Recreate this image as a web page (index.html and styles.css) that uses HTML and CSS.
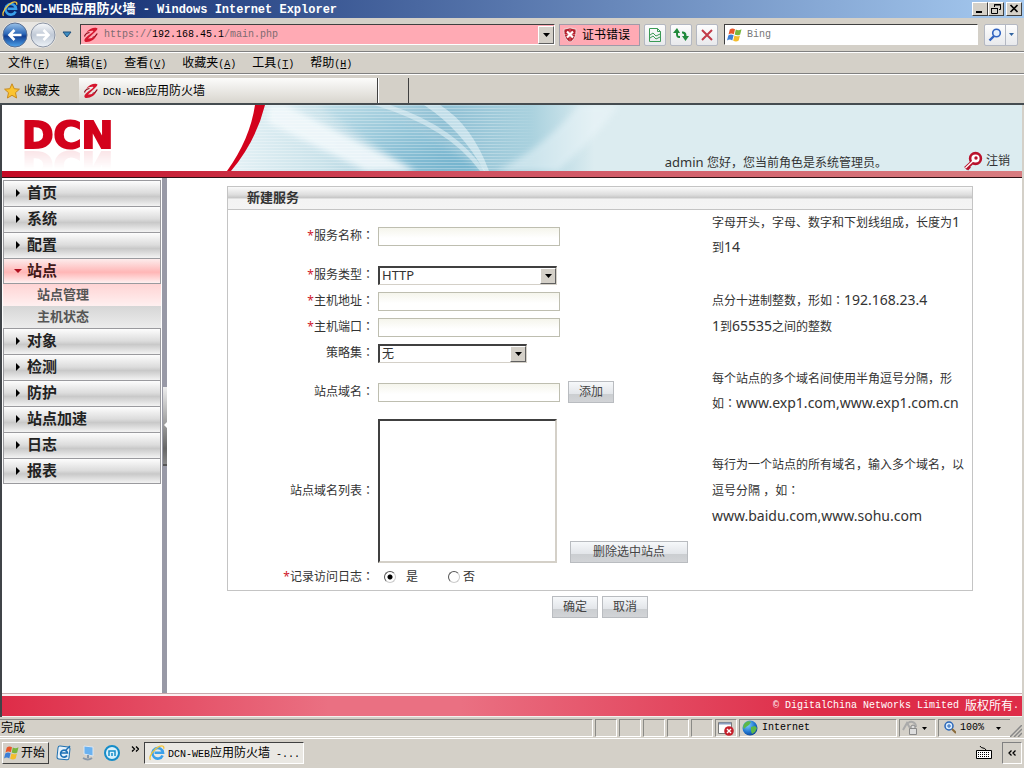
FILE: index.html
```html
<!DOCTYPE html>
<html lang="zh-CN">
<head>
<meta charset="utf-8">
<title>DCN-WEB应用防火墙</title>
<link rel="stylesheet" href="styles.css">
</head>
<body>
<svg class="defs" width="0" height="0" aria-hidden="true">
  <defs>
    <linearGradient id="blue" x1="0" y1="0" x2="0" y2="1"><stop offset="0" stop-color="#9cc4ea"/><stop offset=".45" stop-color="#2c68b8"/><stop offset=".55" stop-color="#123f92"/><stop offset="1" stop-color="#4fa6ee"/></linearGradient>
    <linearGradient id="pale" x1="0" y1="0" x2="0" y2="1"><stop offset="0" stop-color="#f8fafc"/><stop offset=".5" stop-color="#c0c9d6"/><stop offset="1" stop-color="#eef3f8"/></linearGradient>
    <radialGradient id="globe" cx=".35" cy=".3" r=".8"><stop offset="0" stop-color="#7fd0ff"/><stop offset=".6" stop-color="#1f74cf"/><stop offset="1" stop-color="#0a3a86"/></radialGradient>
    <symbol id="ie" viewBox="0 0 16 16">
      <path d="M13.6 10.4A5.3 5.3 0 1 1 14 7.8H5.6" fill="none" stroke="#3aa0ea" stroke-width="2.6"/>
      <path d="M1.5 14.8C-.8 12 5 3.6 10.4 1.4c3.4-1.4 5 0 4.2 2.4" fill="none" stroke="#f2c43a" stroke-width="1.3"/>
    </symbol>
    <symbol id="swirl" viewBox="0 0 16 16">
      <path d="M3 6C6 1 13-.5 14.5 1.500 14 4 9.500 7 5 11.500c3 .3 6-.9 8.500-3.500-1 4-5.500 7-10 7C.5 14.800 1 12.500 3 10.500 6 7.500 9 6.500 10.500 4 8 3.500 5.500 4.300 3 6z" fill="#d5172e"/>
      <path d="M1.500 9.500C2 7.500 4 6 6.500 5.500M9.500 10.500c2-.6 3.800-2 4.800-4" fill="none" stroke="#8f0d1d" stroke-width="1.200"/>
    </symbol>
    <symbol id="flag" viewBox="0 0 16 16">
      <path d="M2.800 2.500C4.500 1 6.300 1.200 8 2.200L6.800 7.200C5 6.200 3.300 6.200 1.500 7.500z" fill="#e8572b"/>
      <path d="M8.800 2.600c1.800 1 3.700 1 5.700-.4l-1.300 5.200c-1.900 1.300-3.700 1.200-5.500.2z" fill="#79b63c"/>
      <path d="M1.300 8.400C3 7.200 4.800 7.200 6.600 8.200L5.300 13.400C3.600 12.300 1.800 12.300 0 13.500z" fill="#3c7fd6"/>
      <path d="M7.400 8.600c1.800 1 3.700 1 5.600-.2l-1.300 5.200c-1.900 1.300-3.700 1.100-5.500.1z" fill="#f4bd2c"/>
    </symbol>
    <symbol id="down" viewBox="0 0 7 4"><path d="M0 0h7L3.500 4z"/></symbol>
  </defs>
</svg>

<header class="titlebar">
  <svg class="i16" aria-hidden="true"><use href="#ie"/></svg>
  <span class="caption"><span class="mb">DCN-WEB</span>应用防火墙<span class="mb"> - Windows Internet Explorer</span></span>
  <span class="winbtns">
    <button type="button" aria-label="最小化"><svg width="10" height="10"><path d="M1 8h6" stroke="#000" stroke-width="2"/></svg></button>
    <button type="button" aria-label="还原"><svg width="10" height="10"><path d="M3.500 3V.5h6v5H8M3 1h7M.5 4.500h6v5h-6zM0 4.500h7" fill="none" stroke="#000"/></svg></button>
    <button type="button" class="close" aria-label="关闭"><svg width="10" height="10"><path d="M1.500 1l7 7M8.500 1l-7 7" stroke="#000" stroke-width="1.700"/></svg></button>
  </span>
</header>

<div class="navbar">
  <span class="backfwd">
    <button type="button" aria-label="后退"><svg width="26" height="26" viewBox="0 0 26 26"><circle cx="13" cy="13" r="12" fill="url(#blue)" stroke="#5a6f92" stroke-width="1"/><path d="M19.500 13H8M12.500 8L7.500 13l5 5" fill="none" stroke="#fff" stroke-width="2.600"/></svg></button>
    <button type="button" aria-label="前进"><svg width="26" height="26" viewBox="0 0 26 26"><circle cx="13" cy="13" r="12" fill="url(#pale)" stroke="#8c95a5" stroke-width="1"/><path d="M6.500 13H18M13.500 8l5 5-5 5" fill="none" stroke="#fff" stroke-width="2.600"/></svg></button>
  </span>
  <svg class="hist" width="10" height="7" aria-hidden="true"><path d="M1 1h8L5 6z" fill="#3f8fc4" stroke="#1d4e7c"/></svg>
  <div class="address">
    <svg class="i16" aria-hidden="true"><use href="#swirl"/></svg>
    <span class="url m">https://<b>192.168.45.1</b>/main.php</span>
    <button type="button" class="drop" aria-label="展开地址"><svg width="7" height="4"><use href="#down"/></svg></button>
  </div>
  <button type="button" class="cert"><svg class="i16" viewBox="0 0 16 16"><path d="M8 .8l6 1.400c.4 6-1.500 10.800-6 13C3.500 13 1.600 8.200 2 2.200z" fill="#b3202c" stroke="#e9dcdc"/><path d="M8 2v12M3 7.500h10" stroke="#d4626b"/><path d="M5 4.500l6 6M11 4.500l-6 6" stroke="#fff" stroke-width="2.200"/></svg>证书错误</button>
  <button type="button" class="tool" aria-label="兼容性视图"><svg width="14" height="16"><path d="M1.500 1.500h8l3 3v10h-11zM9.500 1.500v3h3M2 8l3-2 3 3 4-2M2 11l3-2 3 3 4-2" fill="none" stroke="#3b9a55"/></svg></button>
  <button type="button" class="tool" aria-label="刷新"><svg width="16" height="16"><path d="M0 6l4-5 3 5H5v2c0 1 1 1 2 1v2C4 11 3 10 3 6zM16 9l-3.500 5L9 9h2V8c0-1-1-1.500-2-1.500v-2c3 0 4.500 1 4.500 4.500z" fill="#218a3c"/></svg></button>
  <button type="button" class="tool" aria-label="停止"><svg width="14" height="14"><path d="M2 2l10 10M12 2L2 12" stroke="#c23a48" stroke-width="2"/></svg></button>
  <div class="search">
    <svg class="i16" aria-hidden="true"><use href="#flag"/></svg>
    <input class="m" type="text" placeholder="Bing" aria-label="搜索">
  </div>
  <span class="go">
    <button type="button" aria-label="搜索"><svg width="14" height="14"><circle cx="8.500" cy="5" r="3.800" fill="#e4effc" stroke="#3264c0" stroke-width="1.600"/><path d="M6 8l-4.500 4.500" stroke="#3264c0" stroke-width="2.400"/></svg></button>
    <button type="button" aria-label="搜索选项"><svg width="5" height="3" viewBox="0 0 7 4" fill="#3264a0"><use href="#down"/></svg></button>
  </span>
</div>

<nav class="menubar">
  <button type="button">文件<span class="m">(<u>F</u>)</span></button>
  <button type="button">编辑<span class="m">(<u>E</u>)</span></button>
  <button type="button">查看<span class="m">(<u>V</u>)</span></button>
  <button type="button">收藏夹<span class="m">(<u>A</u>)</span></button>
  <button type="button">工具<span class="m">(<u>T</u>)</span></button>
  <button type="button">帮助<span class="m">(<u>H</u>)</span></button>
</nav>

<div class="tabbar">
  <button type="button" class="fav"><svg class="i16" viewBox="0 0 16 16"><path d="M8 .8l2.200 4.900 5.200.5-3.900 3.500 1.100 5.300L8 12.300 3.400 15l1.100-5.300L.6 6.200l5.200-.5z" fill="#fbc431" stroke="#c98a1c"/></svg>收藏夹</button>
  <button type="button" class="tab"><svg class="i16"><use href="#swirl"/></svg><span><span class="m">DCN-WEB</span>应用防火墙</span></button>
  <button type="button" class="newtab" aria-label="新选项卡"></button>
</div>

<div class="page">
  <div class="banner">
    <svg class="art" viewBox="0 0 796 66" preserveAspectRatio="xMinYMin slice" aria-hidden="true">
      <defs>
        <linearGradient id="sky" x1="0" y1="0" x2="1" y2="0"><stop offset="0" stop-color="#e6f2f6"/><stop offset=".12" stop-color="#c9e2ea"/><stop offset=".27" stop-color="#8fc0d4"/><stop offset=".38" stop-color="#a9d1de"/><stop offset=".46" stop-color="#dcecf0"/><stop offset="1" stop-color="#dcecf0"/></linearGradient>
        <linearGradient id="deep" x1="0" y1="0" x2="1" y2="1"><stop offset="0" stop-color="#b9dbe6"/><stop offset="1" stop-color="#64abc9"/></linearGradient>
        <linearGradient id="fade" gradientUnits="userSpaceOnUse" x1="0" y1="0" x2="310" y2="0"><stop offset=".85" stop-color="#fff"/><stop offset="1" stop-color="#000"/></linearGradient>
        <mask id="fademask" maskUnits="userSpaceOnUse" x="0" y="0" width="310" height="66"><path d="M0 0h310v66H0z" fill="url(#fade)"/></mask>
        <filter id="soft" x="-50%" y="-50%" width="200%" height="200%"><feGaussianBlur stdDeviation="3"/></filter>
        <pattern id="scan" width="4" height="3" patternUnits="userSpaceOnUse"><path d="M0 .5h4" stroke="#fff" stroke-opacity=".28"/></pattern>
      </defs>
      <path d="M36 0H796V66H0Q26 36 36 0z" fill="url(#sky)"/>
      <path d="M90 0l60 0 105 66h-70z" fill="url(#deep)" filter="url(#soft)" opacity=".8"/>
      <path d="M40 0h18l130 66h-50L40 18z" fill="#f3f9fc" filter="url(#soft)" opacity=".85"/>
      <path d="M146 0Q220 22 252 66h5Q228 22 162 0z" fill="#eaf6fa" opacity=".5"/>
      <path d="M196 0Q234 25 256 66h5Q244 20 212 0z" fill="#f4fbfd" opacity=".5"/>
      <path d="M36 0H310V66H0Q26 36 36 0z" fill="url(#scan)" mask="url(#fademask)"/>
      <path d="M330 66Q380 20 390 0L350 0Q320 40 268 66z" fill="#eef7fa" filter="url(#soft)" opacity=".5"/>
      <path d="M27 0H37Q28 36 3 66H-1Q22 34 27 0z" fill="#d3021c"/>
    </svg>
    <div class="logo">DCN</div>
    <div class="user"><span class="lat small">admin</span> 您好，您当前角色是系统管理员。</div>
    <a class="logout" href="#"><svg width="20" height="20" viewBox="0 0 20 20"><path d="M8.500 12L2.500 17.500M4 15.500l2.500 2.500" stroke="#b9122c" stroke-width="4"/><circle cx="12.500" cy="7.500" r="5.400" fill="#fff" stroke="#b9122c" stroke-width="2.600"/><path d="M11 9l-8.500 8" stroke="#fff" stroke-width="1.300"/><circle cx="13" cy="7" r="1.700" fill="#b9122c"/></svg>注销</a>
  </div>
  <div class="redline"></div>

  <div class="main">
    <nav class="side">
      <a class="item" href="#"><i></i>首页</a>
      <a class="item" href="#"><i></i>系统</a>
      <a class="item" href="#"><i></i>配置</a>
      <a class="item open" href="#"><i></i>站点</a>
      <a class="sub current" href="#">站点管理</a>
      <a class="sub" href="#">主机状态</a>
      <a class="item" href="#"><i></i>对象</a>
      <a class="item" href="#"><i></i>检测</a>
      <a class="item" href="#"><i></i>防护</a>
      <a class="item" href="#"><i></i>站点加速</a>
      <a class="item" href="#"><i></i>日志</a>
      <a class="item last" href="#"><i></i>报表</a>
    </nav>
    <div class="splitter"><button type="button" aria-label="折叠菜单"><svg width="3" height="6"><path d="M3 0v6L0 3z" fill="#fff"/></svg></button></div>

    <form class="content">
      <section class="panel">
        <h1>新建服务</h1>
        <div class="row two">
          <label for="name"><em>*</em>服务名称<span class="colon">：</span></label>
          <div class="field"><input id="name" type="text"></div>
          <p class="hint">字母开头，字母、数字和下划线组成，长度为<span class="lat">1</span><br>到<span class="lat">14</span></p>
        </div>
        <div class="row">
          <label for="type"><em>*</em>服务类型<span class="colon">：</span></label>
          <div class="field"><span class="select wide"><select id="type" class="lat small"><option>HTTP</option></select><span class="knob"><svg width="7" height="4"><use href="#down"/></svg></span></span></div>
        </div>
        <div class="row">
          <label for="addr"><em>*</em>主机地址<span class="colon">：</span></label>
          <div class="field"><input id="addr" type="text"></div>
          <p class="hint">点分十进制整数，形如<span class="colon">：</span><span class="lat">192.168.23.4</span></p>
        </div>
        <div class="row">
          <label for="port"><em>*</em>主机端口<span class="colon">：</span></label>
          <div class="field"><input id="port" type="text"></div>
          <p class="hint"><span class="lat">1</span>到<span class="lat">65535</span>之间的整数</p>
        </div>
        <div class="row">
          <label for="policy">策略集<span class="colon">：</span></label>
          <div class="field"><span class="select"><select id="policy"><option>无</option></select><span class="knob"><svg width="7" height="4"><use href="#down"/></svg></span></span></div>
        </div>
        <div class="row two">
          <label for="domain">站点域名<span class="colon">：</span></label>
          <div class="field"><input id="domain" type="text"><button type="button" class="btn">添加</button></div>
          <p class="hint">每个站点的多个域名间使用半角逗号分隔，形<br>如<span class="colon">：</span><span class="lat">www.exp1.com,www.exp1.com.cn</span></p>
        </div>
        <div class="row tall">
          <label for="domains">站点域名列表<span class="colon">：</span></label>
          <div class="field"><select id="domains" class="list" size="8" multiple></select><button type="button" class="btn long">删除选中站点</button></div>
          <p class="hint">每行为一个站点的所有域名，输入多个域名，以<br>逗号分隔 ，如<span class="colon">：</span><br><span class="lat">www.baidu.com,www.sohu.com</span></p>
        </div>
        <div class="row">
          <span class="label" id="loglabel"><em>*</em>记录访问日志<span class="colon">：</span></span>
          <div class="field radios" role="radiogroup" aria-labelledby="loglabel">
            <label><input type="radio" name="log" checked> 是</label>
            <label><input type="radio" name="log">否</label>
          </div>
        </div>
      </section>
      <div class="actions"><button type="submit" class="btn">确定</button><button type="button" class="btn">取消</button></div>
    </form>
  </div>
  <footer class="copyright"><span class="m">© DigitalChina Networks Limited </span>版权所有<span class="m">.</span></footer>
</div>

<div class="status">
  <span class="done">完成</span>
  <span class="cell"></span><span class="cell"></span><span class="cell"></span><span class="cell"></span><span class="cell"></span>
  <span class="cell"><svg class="i16" viewBox="0 0 16 16"><path d="M.5 2.500h13v11H.5z" fill="#fff" stroke="#777"/><path d="M1 3.500h12" stroke="#8b9fc0" stroke-width="2"/><circle cx="11" cy="11" r="4.800" fill="#c5202c"/><path d="M9 9l4 4M13 9l-4 4" stroke="#fff" stroke-width="1.400"/></svg></span>
  <span class="cell zone"><svg class="i16" viewBox="0 0 16 16"><circle cx="8" cy="8" r="7.500" fill="url(#globe)"/><path d="M3 3c2-2 5-2 6-1L7 5 4 7 2 9C.8 7 1 5 3 3zM9 7l4-1 2 2-2 4-3 2-1-3z" fill="#5db847"/></svg><span class="m">Internet</span></span>
  <span class="cell lock"><svg class="i16" viewBox="0 0 16 16"><path d="M1 10L5 3l3 5M6 3c4-3 8 0 8 4" fill="none" stroke="#aaa" stroke-width="2"/><path d="M7.500 8.500h7v6h-7zM9 8V6q2-2 4 0v2" fill="#ddd" stroke="#888"/></svg><svg width="5" height="3" viewBox="0 0 7 4"><use href="#down"/></svg></span>
  <span class="cell zoom"><svg width="12" height="14"><circle cx="5" cy="5" r="4" fill="#d8ecff" stroke="#2a66b8" stroke-width="1.500"/><path d="M3 5h4M5 3v4" stroke="#2a66b8"/><path d="M8 8l4 4" stroke="#8a6a3a" stroke-width="2"/></svg><span class="m">100%</span><svg class="end" width="5" height="3" viewBox="0 0 7 4"><use href="#down"/></svg></span>
  <svg class="grip" width="12" height="12" aria-hidden="true"><path d="M0 12L12 0M4 12l8-8M8 12l4-4" stroke="#888" stroke-width="1.500"/></svg>
</div>

<footer class="taskbar">
  <button type="button" class="start"><svg class="i16"><use href="#flag"/></svg>开始</button>
  <span class="quick">
    <svg class="i16" viewBox="0 0 16 16"><rect x="1.500" y="1.500" width="12" height="13" rx="2" fill="#e6f1fa" stroke="#1f70b0" transform="rotate(6 8 8)"/><path d="M11 10.500a3.500 3.500 0 1 1 .5-2.500H5" fill="none" stroke="#1b6fb5" stroke-width="1.600"/><path d="M9 6l5-5" stroke="#1b6fb5" stroke-width="1.500"/></svg>
    <svg class="i16" viewBox="0 0 16 16"><path d="M4 1l9 1v9l-9-2z" fill="#69b1f0" stroke="#dce6f0"/><path d="M8 10v3M3 13q5 3 9 0" stroke="#8797aa" stroke-width="2" fill="none"/></svg>
    <svg class="i16" viewBox="0 0 16 16"><circle cx="8" cy="8" r="7" fill="#d9f0fb" stroke="#158cc8" stroke-width="2"/><path d="M5 11V6h6v5M8 8v3" stroke="#158cc8" stroke-width="1.500" fill="none"/></svg>
  </span>
  <svg class="more" width="8" height="7" aria-hidden="true"><path d="M1 .5l2.500 2.500L1 5.500M5 .5l2.500 2.500L5 5.500" fill="none" stroke="#000" stroke-width="1.300"/></svg>
  <button type="button" class="task"><svg class="i16"><use href="#ie"/></svg><span><span class="m">DCN-WEB</span>应用防火墙<span class="m"> -...</span></span></button>
  <span class="tray">
    <svg width="16" height="14" aria-label="键盘"><path d="M4 0q1 2 3 2t3 2" fill="none" stroke="#000"/><path d="M.5 4.500h15v8H.5z" fill="#fff" stroke="#000"/><path d="M2 6.500h12M2 8.500h12M2 10.500h12" stroke="#000" stroke-dasharray="1 1"/></svg>
    <button type="button" class="expand" aria-label="展开"><svg width="8" height="7"><path d="M3.500.5L1 3l2.500 2.500M7.500.5L5 3l2.500 2.500" fill="none" stroke="#000" stroke-width="1.300"/></svg></button>
  </span>
</footer>
</body>
</html>
```
FILE: styles.css
```css
* { box-sizing: border-box; }
body {
  margin: 0;
  min-height: 100vh;
  display: flex;
  flex-direction: column;
  background: #d4d0c8;
  color: #000;
  font: 12px/16px "Liberation Sans", "Noto Sans CJK SC", sans-serif;
}
button, input, select { font: inherit; color: inherit; margin: 0; padding: 0; border: 0; border-radius: 0; }
button { background: none; }
a { color: inherit; text-decoration: none; }
svg { flex: none; display: block; }
.defs { position: absolute; }
.i16 { width: 16px; height: 16px; }
.m { font-family: "Liberation Mono", monospace; font-size: 10px; line-height: 1; white-space: pre; }
.mb { font-family: "Liberation Mono", monospace; font-size: 12px; line-height: 1; white-space: pre; }
.lat { font-family: "Noto Sans", sans-serif; font-size: 14px; line-height: 1; }
.lat.small { font-size: 13px; }

.titlebar {
  height: 18px;
  display: flex;
  align-items: center;
  gap: 2px;
  padding: 0 2px;
  background: linear-gradient(90deg, #0a246a, #a6caf0);
  color: #fff;
  font-size: 13px;
  font-weight: bold;
}
.caption { white-space: nowrap; }
.winbtns { display: flex; margin-left: auto; }
.winbtns button {
  width: 16px;
  height: 14px;
  display: grid;
  place-items: center;
  background: #d4d0c8;
  border: 1px solid;
  border-color: #fff #404040 #404040 #fff;
}
.winbtns .close { margin-left: 2px; }

.navbar {
  height: 34px;
  display: flex;
  align-items: center;
  gap: 4px;
  padding: 0 6px 0 2px;
  border-bottom: 1px solid #808080;
}
.backfwd { display: flex; gap: 2px; border-radius: 14px; background: #e8e6e2; }
.hist { margin: 0 4px 0 2px; }
.address {
  flex: 1;
  height: 21px;
  display: flex;
  align-items: center;
  gap: 5px;
  padding-left: 2px;
  background: #ffaab4;
  border: 1px solid;
  border-color: #404040 #fff #fff #404040;
}
.url { color: #7d6b70; }
.url b { font-weight: normal; color: #000; }
.drop, .knob {
  width: 16px;
  display: grid;
  place-items: center;
  background: #d4d0c8;
  border: 1px solid;
  border-color: #fff #606060 #606060 #fff;
}
.drop { height: 18px; margin-left: auto; }
.cert {
  height: 22px;
  width: 81px;
  display: flex;
  align-items: center;
  gap: 4px;
  padding-left: 2px;
  background: #ffaab4;
  border: 1px solid #a09aa8;
}
.tool, .go {
  height: 22px;
  background: linear-gradient(#fdfdfd, #e8e9ec);
  border: 1px solid #b4b8c2;
  border-radius: 2px;
}
.tool { width: 22px; display: grid; place-items: center; }
.search {
  width: 254px;
  height: 21px;
  display: flex;
  align-items: center;
  gap: 4px;
  padding-left: 2px;
  margin-left: 2px;
  background: #fff;
  border: 1px solid;
  border-color: #404040 #fff #fff #404040;
}
.search input { flex: 1; min-width: 0; background: none; }
.search input::placeholder { color: #777; opacity: 1; }
.go { display: flex; margin-left: 2px; }
.go button { width: 20px; display: grid; place-items: center; }
.go button + button { width: 12px; border-left: 1px solid #b4b8c2; }

.menubar {
  height: 22px;
  display: flex;
  align-items: center;
  gap: 16px;
  padding: 0 8px;
  border-top: 1px solid #fff;
  border-bottom: 1px solid #808080;
}

.tabbar {
  height: 31px;
  display: flex;
  align-items: stretch;
  padding: 3px 5px 0 4px;
  border-top: 1px solid #fff;
  border-bottom: 2px solid #454c50;
}
.fav { width: 75px; display: flex; align-items: center; gap: 4px; }
.tab {
  width: 299px;
  display: flex;
  align-items: center;
  gap: 4px;
  padding-left: 4px;
  background: linear-gradient(#fcfcfb, #d8d5ce);
  border-right: 1px solid #404040;
}
.newtab { width: 31px; border-right: 1px solid #404040; border-left: 1px solid #fff; }

.page {
  flex: 1;
  display: flex;
  flex-direction: column;
  background: #fff;
  border-left: 2px solid #404448;
  border-right: 2px solid #d4d0c8;
  color: #333;
}
.banner {
  height: 66px;
  position: relative;
  display: flex;
  align-items: flex-end;
  overflow: hidden;
}
.art { position: absolute; left: 226px; right: 0; top: 0; height: 66px; width: calc(100% - 226px); overflow: visible; }
.logo {
  align-self: flex-start;
  margin: 9px 0 0 20px;
  font: bold 38px/42px "DejaVu Sans", sans-serif;
  color: #d3021c;
  -webkit-text-stroke: 2px #d3021c;
  -webkit-box-reflect: below -12px linear-gradient(transparent 40%, rgba(0, 0, 0, .14));
}
.user { position: relative; margin-left: auto; white-space: nowrap; line-height: 16px; }
.logout {
  position: relative;
  display: flex;
  align-items: center;
  gap: 3px;
  margin: 0 12px 0 76px;
  line-height: 18px;
}
.redline {
  height: 7px;
  background: linear-gradient(90deg, #c40a24, #d05060 45%, #d87c80);
  border-bottom: 1px solid #301014;
}

.main { flex: 1; display: flex; }
.side { width: 160px; padding: 2px 1px; }
.item {
  height: 26px;
  display: flex;
  align-items: center;
  gap: 7px;
  padding: 0 0 1px 10px;
  border: 1px solid #9a9a9e;
  border-bottom: 0;
  background: linear-gradient(#fdfdfd, #dcdcdc 48%, #c9c9c9 62%, #f3f3f3);
  color: #222;
  font-size: 15px;
  font-weight: bold;
}
.item i { border: 4px solid transparent; border-left-color: #000; border-right: 0; margin-left: 2px; }
.item.open { background: linear-gradient(#fdecec, #ffb6b6 55%, #fff0f0); border-bottom: 1px solid #9a9a9e; color: #401818; gap: 5px; padding-bottom: 0; }
.item.open i { border: 4px solid transparent; border-top-color: #b01020; border-bottom: 0; margin: 0; }
.item.last { border-bottom: 1px solid #9a9a9e; padding-bottom: 0; }
.sub {
  height: 22px;
  display: flex;
  align-items: center;
  padding-left: 34px;
  background: linear-gradient(#d6d6d6, #ececec);
  color: #555;
  font-size: 13px;
  font-weight: bold;
}
.sub.current { background: linear-gradient(#ffd4d4, #fff0f0); }
.splitter { width: 5px; display: grid; align-items: center; background: #9899a6; }
.splitter button {
  width: 4px;
  height: 79px;
  display: grid;
  place-items: center;
  margin-left: 1px;
  margin-bottom: 19px;
  background: linear-gradient(#eee, #666 80%, #888);
  border-bottom: 2px solid #555;
}

.content { flex: 1; padding: 8px 49px 16px 60px; }
.panel { border: 1px solid #c4c4c4; }
.panel h1 {
  margin: 0;
  padding-left: 19px;
  height: 23px;
  border-bottom: 1px solid #c4c4c4;
  background: linear-gradient(#fafafa, #dedede 35%, #c8c8c8 48%, #f3f3f3 56%, #f4f4f4);
  color: #333;
  font-size: 13px;
  line-height: 21px;
}
.row {
  min-height: 26px;
  display: grid;
  grid-template-columns: 146px 1fr 254px;
  column-gap: 4px;
  padding-right: 6px;
  align-items: center;
}
.row .field { margin-right: 2px; }
.row.two { min-height: 52px; }
.row.tall { min-height: 146px; }
.row > label, .label { text-align: right; white-space: nowrap; }
.row em { color: #d0202c; font-family: "Noto Sans", sans-serif; font-style: normal; line-height: 1; }
.colon { font-family: "Noto Sans CJK JP", sans-serif; font-feature-settings: "locl" 0; line-height: 1; }
.hint { margin: 0; line-height: 26px; white-space: nowrap; }
.two .hint { line-height: 25px; }
.field { display: flex; align-items: center; gap: 8px; }
.field input[type="text"] {
  width: 182px;
  height: 19px;
  padding: 0 4px;
  background: linear-gradient(#f5f5ec, #fff 60%);
  border: 1px solid #bebeb0;
}
.select { position: relative; width: 149px; height: 19px; display: flex; }
.select.wide { width: 179px; }
.select select {
  width: 100%;
  appearance: none;
  padding: 0 20px 0 2px;
  background: #fff;
  border: 1px solid;
  border-width: 2px 1px 1px 2px;
  border-color: #404040 #d4d0c8 #d4d0c8 #404040;
}
.knob { position: absolute; right: 1px; top: 2px; bottom: 1px; pointer-events: none; }
.list {
  width: 179px;
  height: 144px;
  margin-right: 5px;
  background: #fff;
  border: 2px solid;
  border-color: #404040 #d4d0c8 #d4d0c8 #404040;
}
.btn {
  width: 46px;
  height: 22px;
  background: linear-gradient(#f6f8fa, #e2e5e9 60%, #cbced1 62%, #d2d4d7);
  border: 1px solid #b9bcc0;
  color: #444;
}
.btn.long { width: 118px; align-self: flex-end; }
.radios { gap: 30px; padding-left: 6px; }
.radios label { display: flex; align-items: center; gap: 3px; }
.radios label:first-child { gap: 10px; }
.radios input {
  appearance: none;
  width: 12px;
  height: 12px;
  border: 1px solid;
  border-color: #555 #ccc #ccc #555;
  border-radius: 50%;
  background: #fff;
}
.radios input:checked { background: radial-gradient(circle, #000 2px, #fff 3px); }
.actions { display: flex; justify-content: center; gap: 4px; margin-top: 5px; }

.copyright {
  height: 24px;
  padding: 2px 3px 0;
  display: flex;
  align-items: center;
  justify-content: flex-end;
  border-top: 1px solid #c8a8ac;
  border-bottom: 1px solid #f4f2ee;
  box-shadow: inset 0 2px #fdf0f2;
  background: linear-gradient(90deg, #de2c48, #ea7082 32%, #ea7082 45%, #de2c48 80%);
  color: #fff;
}

.status {
  height: 22px;
  display: flex;
  align-items: stretch;
  padding: 2px 2px 1px 0;
  border-bottom: 1px solid #fff;
}
.done, .cell {
  display: flex;
  align-items: center;
  gap: 4px;
  border: 1px solid;
  border-color: #8a8a86 #fff #fff #8a8a86;
}
.done { flex: 1; border-left: 0; padding-left: 1px; }
.cell { width: 22px; margin-left: 2px; padding-left: 2px; }
.zone { width: 158px; }
.lock { width: 37px; }
.zoom { width: 72px; padding-left: 5px; border-right: 0; }
.zoom .end { margin-left: 8px; }
.grip { align-self: flex-end; }

.taskbar { height: 29px; display: flex; align-items: center; padding: 3px 2px 4px; }
.start {
  width: 47px;
  height: 22px;
  display: flex;
  align-items: center;
  gap: 1px;
  padding-left: 1px;
  white-space: nowrap;
  border: 1px solid;
  border-color: #fff #404040 #404040 #fff;
}
.quick { display: flex; gap: 8px; margin: 0 11px 0 7px; }
.more { align-self: flex-start; margin-top: 4px; }
.task {
  width: 160px;
  height: 22px;
  margin-left: 5px;
  display: flex;
  align-items: center;
  gap: 3px;
  padding-left: 4px;
  background: #eae8e3;
  border: 1px solid;
  border-color: #404040 #fff #fff #404040;
}
.tray { display: flex; align-items: center; gap: 10px; margin-left: auto; }
.expand {
  width: 20px;
  height: 22px;
  display: grid;
  place-items: center;
  border: 1px solid;
  border-color: #808080 #fff #fff #808080;
}
```
